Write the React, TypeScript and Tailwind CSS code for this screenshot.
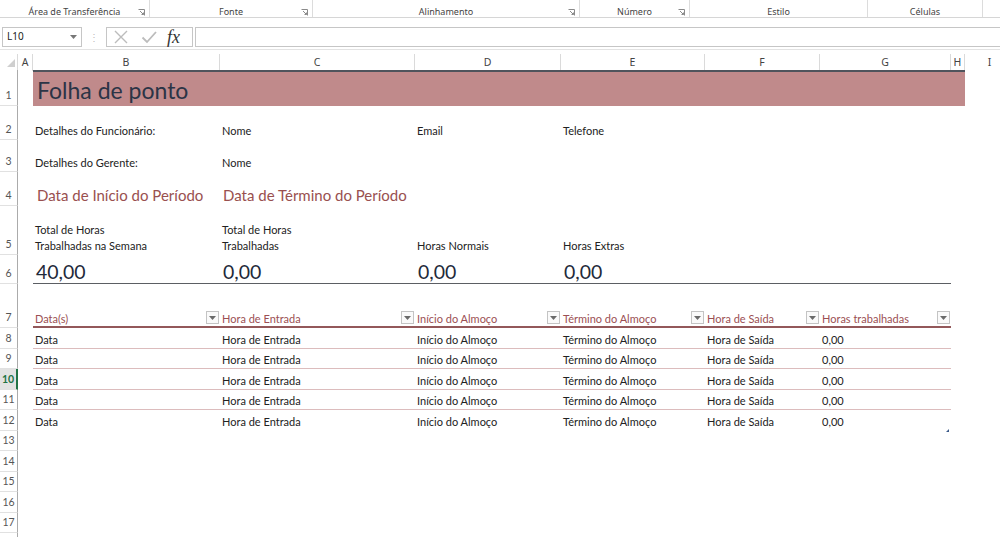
import React from "react";

const COLS = "grid grid-cols-[15px_187px_195px_146px_144px_115px_131px_14px_50px]";

function Launcher() {
  return (
    <svg width="7" height="7" viewBox="0 0 7 7" className="absolute right-[4px] top-[9px]">
      <path d="M0.5 0.5H6.5V6.5" fill="none" stroke="#8a8a8a" strokeWidth="1" />
      <path d="M2 2L5.5 5.5M3.5 5.5H5.5V3.5" fill="none" stroke="#8a8a8a" strokeWidth="1" />
    </svg>
  );
}

function Group({ label, width, launcher = false }: { label: string; width: string; launcher?: boolean }) {
  return (
    <div className={`relative ${width} shrink-0 h-full border-r border-[#dcdcdc] flex items-end justify-center`}>
      <span className="text-[9px] text-[#444] leading-[9px] mb-[1px]">{label}</span>
      {launcher && <Launcher />}
    </div>
  );
}

function Filter() {
  return (
    <div className="w-[13px] h-[13px] shrink-0 border border-[#c4c4c4] bg-[#fafafa] flex items-center justify-center mb-[2px] mr-[1px]">
      <svg width="7" height="4" viewBox="0 0 7 4">
        <path d="M0 0H7L3.5 4Z" fill="#6a6a6a" />
      </svg>
    </div>
  );
}

function SheetRow({
  n, h, active = false, children,
}: {
  n: number; h: string; active?: boolean; children?: React.ReactNode;
}) {
  return (
    <div className={`flex ${h}`}>
      <div
        className={`w-[18px] shrink-0 flex items-end justify-center border-b border-[#e1e1e1] leading-[20px] text-[10.5px] ${
          active ? "border-r-2 border-r-[#217346] text-[#217346] font-bold bg-[#e2e2e2]" : "border-r border-r-[#ababab] text-[#555]"
        }`}
      >
        {n}
      </div>
      <div className={`flex-1 ${COLS}`}>{children}</div>
    </div>
  );
}

const rowData = [
  { n: 8, h: "h-[21px]" },
  { n: 9, h: "h-[20px]" },
  { n: 10, h: "h-[21px]", active: true },
  { n: 11, h: "h-[20px]" },
  { n: 12, h: "h-[21px]", last: true },
];

const heads = [
  "Data(s)",
  "Hora de Entrada",
  "Início do Almoço",
  "Término do Almoço",
  "Hora de Saída",
  "Horas trabalhadas",
];

const starts = ["col-start-2", "col-start-3", "col-start-4", "col-start-5", "col-start-6", "col-start-7"];

export default function App() {
  return (
    <div className="w-[1000px] h-[537px] overflow-hidden bg-white font-['Noto_Sans',sans-serif]">
      {/* ribbon group labels */}
      <div className="flex h-[18px] border-b border-[#d6d6d6]">
        <Group label="Área de Transferência" width="w-[150px]" launcher />
        <Group label="Fonte" width="w-[163px]" launcher />
        <Group label="Alinhamento" width="w-[267px]" launcher />
        <Group label="Número" width="w-[110px]" launcher />
        <Group label="Estilo" width="w-[178px]" />
        <Group label="Células" width="w-[115px]" />
      </div>

      {/* formula bar */}
      <div className="flex items-center h-[32px] pt-[7px] pb-[1px] border-b border-[#e3e3e3]">
        <div className="ml-[2px] w-[80px] h-[20px] border border-[#c6c6c6] flex items-center justify-between px-[4px]">
          <span className="text-[10px] text-[#222]">L10</span>
          <svg width="7" height="4" viewBox="0 0 7 4"><path d="M0 0H7L3.5 4Z" fill="#777" /></svg>
        </div>
        <div className="w-[24px] flex justify-center text-[#bdbdbd] text-[10px] leading-none">⋮</div>
        <div className="w-[87px] h-[20px] border border-[#c6c6c6] flex items-center">
          <svg width="16" height="14" viewBox="0 0 16 14" className="ml-[6px]">
            <path d="M2 1L14 13M14 1L2 13" stroke="#bcbcbc" strokeWidth="1.4" fill="none" />
          </svg>
          <svg width="16" height="14" viewBox="0 0 16 14" className="ml-[12px]">
            <path d="M1.5 7.5L6 12L15 2" stroke="#bcbcbc" strokeWidth="1.8" fill="none" />
          </svg>
          <span className="ml-[10px] font-['Liberation_Serif',serif] italic text-[18px] leading-none text-[#333]">fx</span>
        </div>
        <div className="ml-[2px] flex-1 h-[20px] border border-r-0 border-[#c6c6c6]" />
      </div>

      {/* column headers */}
      <div className="flex h-[16px] mt-[4px] text-[10.5px] text-[#444] leading-[17px]">
        <div className="w-[18px] shrink-0 relative border-r border-[#dadada]">
          <svg width="8" height="8" viewBox="0 0 8 8" className="absolute right-[2px] bottom-[3px]">
            <path d="M8 0V8H0Z" fill="#cfcfcf" />
          </svg>
        </div>
        <div className={`flex-1 ${COLS}`}>
          {["A", "B", "C", "D", "E", "F", "G", "H", "I"].map((c) => (
            <div key={c} className="text-center border-r border-[#dadada]">{c}</div>
          ))}
        </div>
      </div>

      {/* sheet */}
      <div className="font-['Lato','Open_Sans',sans-serif] text-[11px] text-[#222]">
        <SheetRow n={1} h="h-[36px]">
          <div className="col-start-2 col-span-7 border-t-2 border-[#4f545c] bg-[#c08a8b] flex items-end pl-[4px] pb-[1px]">
            <span className="text-[23px] leading-[30px] text-[#2b3446]">Folha de ponto</span>
          </div>
        </SheetRow>

        <SheetRow n={2} h="h-[34px]">
          <div className="col-start-2 flex items-end pl-[2px] pb-[1px] leading-[16px]">Detalhes do Funcionário:</div>
          <div className="col-start-3 flex items-end pl-[2px] pb-[1px] leading-[16px]">Nome</div>
          <div className="col-start-4 flex items-end pl-[2px] pb-[1px] leading-[16px]">Email</div>
          <div className="col-start-5 flex items-end pl-[2px] pb-[1px] leading-[16px]">Telefone</div>
        </SheetRow>

        <SheetRow n={3} h="h-[32px]">
          <div className="col-start-2 flex items-end pl-[2px] pb-[1px] leading-[16px]">Detalhes do Gerente:</div>
          <div className="col-start-3 flex items-end pl-[2px] pb-[1px] leading-[16px]">Nome</div>
        </SheetRow>

        <SheetRow n={4} h="h-[34px]">
          <div className="col-start-2 flex items-end pl-[4px] pb-[1px] text-[15px] leading-[20px] text-[#99504f] whitespace-nowrap">
            Data de Início do Período
          </div>
          <div className="col-start-3 flex items-end pl-[3px] pb-[1px] text-[15px] leading-[20px] text-[#99504f] whitespace-nowrap">
            Data de Término do Período
          </div>
        </SheetRow>

        <SheetRow n={5} h="h-[49px]">
          <div className="col-start-2 flex flex-col justify-end pl-[2px] pb-[1px] leading-[16px]">
            <span>Total de Horas</span>
            <span>Trabalhadas na Semana</span>
          </div>
          <div className="col-start-3 flex flex-col justify-end pl-[2px] pb-[1px] leading-[16px]">
            <span>Total de Horas</span>
            <span>Trabalhadas</span>
          </div>
          <div className="col-start-4 flex items-end pl-[2px] pb-[1px] leading-[16px]">Horas Normais</div>
          <div className="col-start-5 flex items-end pl-[2px] pb-[1px] leading-[16px]">Horas Extras</div>
        </SheetRow>

        <SheetRow n={6} h="h-[29px]">
          {["40,00", "0,00", "0,00", "0,00", "", ""].map((v, i) => (
            <div
              key={i}
              className={`${starts[i]} flex items-end border-b border-[#5b5e63] pl-[3px] text-[19.5px] leading-[22px] text-[#1f2a3a]`}
            >
              {v}
            </div>
          ))}
        </SheetRow>

        <SheetRow n={7} h="h-[44px]">
          {heads.map((t, i) => (
            <div
              key={t}
              className={`${starts[i]} flex items-end justify-between border-b-2 border-[#93585a]`}
            >
              <span className="pl-[2px] leading-[15px] text-[#9b4f53]">{t}</span>
              <Filter />
            </div>
          ))}
        </SheetRow>

        {rowData.map((r) => (
          <SheetRow key={r.n} n={r.n} h={r.h} active={r.active}>
            {["Data", "Hora de Entrada", "Início do Almoço", "Término do Almoço", "Hora de Saída", "0,00"].map((t, i) => (
              <div
                key={i}
                className={`${starts[i]} flex items-end justify-between pl-[2px] pb-[0px] leading-[16px] ${
                  r.last ? "pb-[1px]" : "border-b border-[#dcbcbd]"
                }`}
              >
                <span>{t}</span>
                {r.last && i === 5 && (
                  <svg width="3" height="3" viewBox="0 0 3 3" className="mr-[2px] mb-[-2px]">
                    <path d="M3 0V3H0Z" fill="#3b5a8a" />
                  </svg>
                )}
              </div>
            ))}
          </SheetRow>
        ))}

        {[
          { n: 13, h: "h-[20px]" },
          { n: 14, h: "h-[21px]" },
          { n: 15, h: "h-[20px]" },
          { n: 16, h: "h-[21px]" },
          { n: 17, h: "h-[20px]" },
        ].map((r) => (
          <SheetRow key={r.n} n={r.n} h={r.h} />
        ))}
        <div className="flex h-[10px]">
          <div className="w-[18px] shrink-0 border-r border-[#ababab]" />
        </div>
      </div>
    </div>
  );
}
